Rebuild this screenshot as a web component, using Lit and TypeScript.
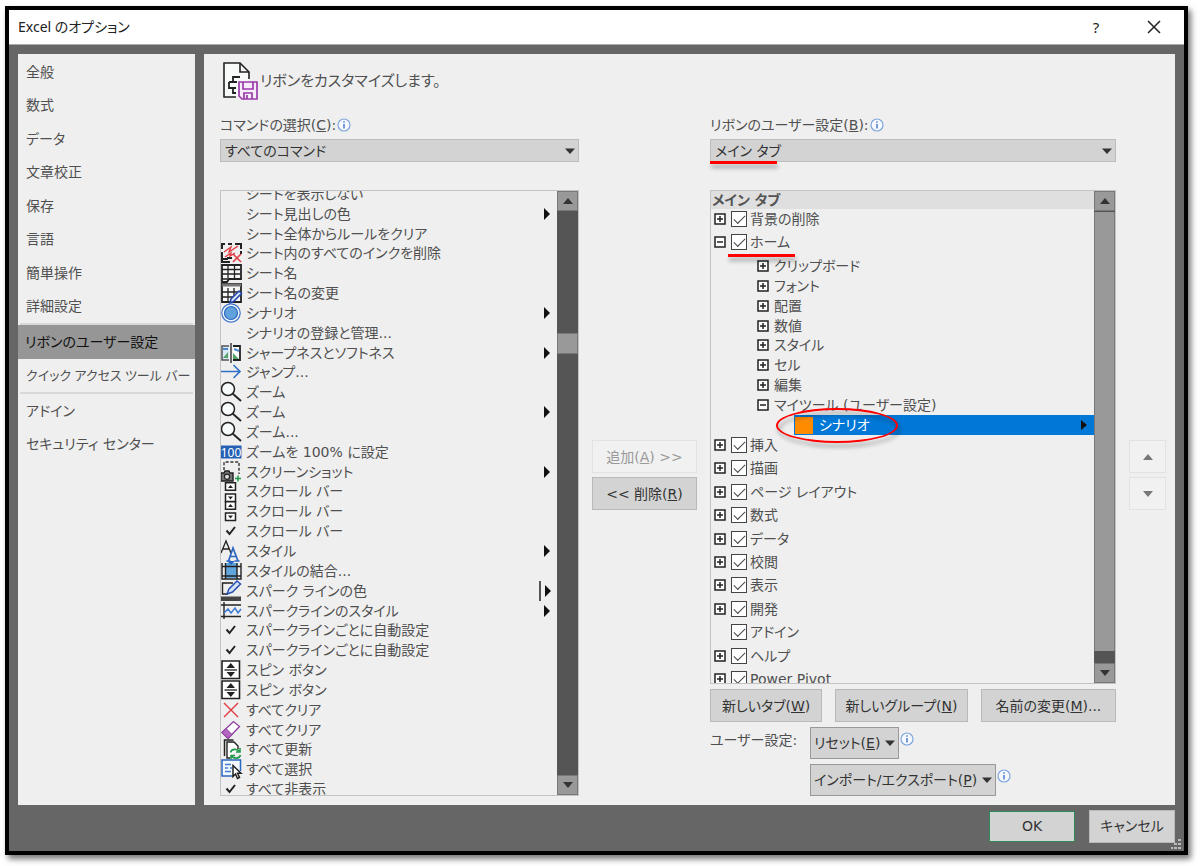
import { LitElement, html, svg, css, nothing, type TemplateResult } from "lit";
import { customElement, property } from "lit/decorators.js";
import { classMap } from "lit/directives/class-map.js";

type Flyout = "menu" | "split" | "";
interface Command { icon: string; label: string; flyout?: Flyout }
interface Tab { label: string; leaf?: boolean }

const INK = "#222";
const BLUE = "#2b66c0";

const icons: Record<string, TemplateResult> = {
  inkDelete: svg`
    <path d="M4 1H1v5M1 9v10h8M7 1h4M14 1h6v5M20 8v3M1 16h6M7 16v-1h4" fill="none" stroke="${INK}" stroke-width="2"/>
    <path d="M3 9l7-5-2 5 9-6M4 14l6-4-1 3 5-3" fill="none" stroke="#e0393e" stroke-width="1.3"/>
    <path d="M12 11l8 8M20 11l-8 8" stroke="#e0393e" stroke-width="1.5"/>`,
  sheet: svg`
    <path d="M1 2h19v14H8l-2 3H1z" fill="#f7f7f7" stroke="${INK}" stroke-width="1.8"/>
    <path d="M1 6.500h18M1 11h18M7 2v13M13.500 2v13M1 16h8" fill="none" stroke="${INK}" stroke-width="1.3"/>`,
  sheetEdit: svg`
    <path d="M1 1h19v18H1z" fill="#f7f7f7" stroke="${INK}" stroke-width="1.8"/>
    <path d="M1 2h19" stroke="#777" stroke-width="3"/>
    <path d="M1 9h18M1 14h14M7 5v14M13 5v10" fill="none" stroke="${INK}" stroke-width="1.3"/>
    <path d="M9 20l1-4 8-8 2.500 2.500-8 8z" fill="#d7e4f7" stroke="#2346a8" stroke-width="1.5"/>`,
  scenario: svg`
    <circle cx="10" cy="10" r="9.200" fill="#f4f8fd" stroke="#3f74c9" stroke-width="1.2"/>
    <circle cx="10" cy="10" r="6.500" fill="#60a3dc" stroke="#2b66c0" stroke-width="1.2"/>`,
  sharp: svg`
    <path d="M8 3H1v14h7" fill="#dbeafa" stroke="#555" stroke-width="1.5"/>
    <path d="M12 3h7v14h-7" fill="#fff" stroke="${INK}" stroke-width="1.8"/>
    <path d="M2 15l5-6v6zM12 10l6 6h-6z" fill="#56a465"/>
    <path d="M13 6l5 2M2 6h5" stroke="#4f8ad0" stroke-width="2"/>
    <path d="M10 0v20" stroke="${INK}" stroke-width="1.3"/>`,
  jump: svg`<path d="M0 9.500h18.500M12.500 3L19 9.500 12.500 16" fill="none" stroke="#2f6fc8" stroke-width="1.6"/>`,
  zoom: svg`
    <circle cx="7" cy="7" r="6.500" fill="#f8fbfc" stroke="${INK}" stroke-width="1.5"/>
    <path d="M11.800 11.800L20 19" stroke="${INK}" stroke-width="1.8"/>`,
  zoom100: svg`
    <path d="M0 3.500h20.500v13H0z" fill="#2560b5"/>
    <text x="10" y="14.500" text-anchor="middle" class="hundred">100</text>`,
  screenshot: svg`
    <path d="M3 8V0h15v12" fill="none" stroke="#333" stroke-width="1.4" stroke-dasharray="3 1.8"/>
    <path d="M0 11h3l1-2h4l1 2h3v8H0z" fill="#777" stroke="${INK}" stroke-width="1.4"/>
    <circle cx="6" cy="14.800" r="2.600" fill="#ddd" stroke="${INK}" stroke-width="1.2"/>
    <path d="M14 16.500h6M17 13.500v6" stroke="#1f9c4b" stroke-width="1.5"/>`,
  scroll: svg`
    <path d="M4.500 .7h10v7.500h-10zM4.500 12h10v7.500h-10z" fill="#fff" stroke="${INK}" stroke-width="1.5"/>
    <path d="M7 6l2.500-3L12 6zM7 14.500l2.500 3 2.500-3z" fill="${INK}"/>`,
  check: svg`<path d="M5.500 9.500l3 3.500L14 6" fill="none" stroke="#222" stroke-width="2"/>`,
  style: svg`
    <path d="M0 12L5 0l5 12M1.800 8h6.500" fill="none" stroke="${INK}" stroke-width="1.3"/>
    <path d="M5.500 20h4M13.500 20h5M7.500 20L12 7l5 13M9 15.500h6" fill="none" stroke="${BLUE}" stroke-width="1.7"/>`,
  mergeStyle: svg`
    <path d="M4 2h12v15H4z" fill="#5ea6dc"/>
    <path d="M1 2v16h19V2M4.500 2v16M16 2v16M1 5.500h19M1 15h19" fill="none" stroke="${INK}" stroke-width="1.4"/>
    <path d="M6 0h8l-4 4z" fill="${BLUE}"/>`,
  sparkColor: svg`
    <path d="M12 2H1.500v11H7" fill="none" stroke="${INK}" stroke-width="1.4"/>
    <path d="M6 13l2-5 8-8 3.500 3-8 8z" fill="#d7e4f7" stroke="#2a50b0" stroke-width="1.5"/>
    <path d="M0 15.500h20v4.500H0z" fill="#444"/>`,
  sparkStyle: svg`
    <path d="M0 4h20M0 15.500h20M3 1v17" fill="none" stroke="${INK}" stroke-width="1.4"/>
    <path d="M3 12l4-4 3 4 4-5 3 5 3-4" fill="none" stroke="#3c7bd6" stroke-width="1.5"/>`,
  spin: svg`
    <path d="M1 1h17.500v17.500H1z" fill="#fff" stroke="${INK}" stroke-width="1.6"/>
    <path d="M5.500 8l4.300-5L14 8zM5.500 12l4.300 5 4.200-5z" fill="${INK}"/>
    <path d="M3.500 10h12.500" stroke="${INK}" stroke-width="1.3"/>`,
  cross: svg`<path d="M3 3l14 14M17 3L3 17" stroke="#e0393e" stroke-width="1.4"/>`,
  eraser: svg`
    <path d="M1 12.500L12.500 1.500l6 5L7 18.500z" fill="#fff" stroke="#8c3c9e" stroke-width="1.3"/>
    <path d="M1 12.500l4-4 6 6-4 4z" fill="#b466c2" stroke="#8c3c9e" stroke-width="1"/>`,
  refresh: svg`
    <path d="M3.500 17V1h9" fill="none" stroke="${INK}" stroke-width="1.5"/>
    <path d="M9 19H6V3h7l4 4v3" fill="#fff" stroke="${INK}" stroke-width="1.4"/>
    <path d="M9.500 13.500c1-4 7-4 9-1M19 9v4h-4M19.500 16c-1 4-7 4-9 1M10 20.500v-4h4" fill="none" stroke="#219a49" stroke-width="1.6"/>`,
  select: svg`
    <path d="M19.500 12V1H1v16h11" fill="#f4f9ff" stroke="${BLUE}" stroke-width="1.5"/>
    <path d="M4 5.500h6M4 9h3M9 9h2M4 12.500h6" stroke="#3c7bd6" stroke-width="1.5"/>
    <path d="M12 6.500v11l2.500-2.500 2 4.500 2-1-2-4.200H20z" fill="#fff" stroke="${INK}" stroke-width="1.5"/>`,
};

const commands: Command[] = [
  { icon: "", label: "シートを表示しない" },
  { icon: "", label: "シート見出しの色", flyout: "menu" },
  { icon: "", label: "シート全体からルールをクリア" },
  { icon: "inkDelete", label: "シート内のすべてのインクを削除" },
  { icon: "sheet", label: "シート名" },
  { icon: "sheetEdit", label: "シート名の変更" },
  { icon: "scenario", label: "シナリオ", flyout: "menu" },
  { icon: "", label: "シナリオの登録と管理..." },
  { icon: "sharp", label: "シャープネスとソフトネス", flyout: "menu" },
  { icon: "jump", label: "ジャンプ..." },
  { icon: "zoom", label: "ズーム" },
  { icon: "zoom", label: "ズーム", flyout: "menu" },
  { icon: "zoom", label: "ズーム..." },
  { icon: "zoom100", label: "ズームを 100% に設定" },
  { icon: "screenshot", label: "スクリーンショット", flyout: "menu" },
  { icon: "scroll", label: "スクロール バー" },
  { icon: "scroll", label: "スクロール バー" },
  { icon: "check", label: "スクロール バー" },
  { icon: "style", label: "スタイル", flyout: "menu" },
  { icon: "mergeStyle", label: "スタイルの結合..." },
  { icon: "sparkColor", label: "スパーク ラインの色", flyout: "split" },
  { icon: "sparkStyle", label: "スパークラインのスタイル", flyout: "menu" },
  { icon: "check", label: "スパークラインごとに自動設定" },
  { icon: "check", label: "スパークラインごとに自動設定" },
  { icon: "spin", label: "スピン ボタン" },
  { icon: "spin", label: "スピン ボタン" },
  { icon: "cross", label: "すべてクリア" },
  { icon: "eraser", label: "すべてクリア" },
  { icon: "refresh", label: "すべて更新" },
  { icon: "select", label: "すべて選択" },
  { icon: "check", label: "すべて非表示" },
];

const topTabs: Tab[] = [{ label: "背景の削除" }, { label: "ホーム" }];
const homeGroups = ["クリップボード", "フォント", "配置", "数値", "スタイル", "セル", "編集", "マイツール (ユーザー設定)"];
const otherTabs: Tab[] = [
  { label: "挿入" }, { label: "描画" }, { label: "ページ レイアウト" }, { label: "数式" },
  { label: "データ" }, { label: "校閲" }, { label: "表示" }, { label: "開発" },
  { label: "アドイン", leaf: true }, { label: "ヘルプ" }, { label: "Power Pivot" },
];

const base = css`
  * { box-sizing: border-box; }
  button, select, input { font: inherit; font-feature-settings: inherit; color: inherit; margin: 0; }
  ul { list-style: none; margin: 0; padding: 0; }
  svg { display: block; flex: none; }
`;

const infoIcon = html`<svg width="14" height="14" viewBox="0 0 14 14" role="img" aria-label="情報">
  <circle cx="7" cy="7" r="6" fill="#f6faff" stroke="#7fa6dc" stroke-width="1.2"/>
  <path d="M7 6v4.500M7 3.200v1.600" stroke="#3f74c9" stroke-width="1.4"/></svg>`;
const caret = html`<svg width="10" height="6" viewBox="0 0 10 6" aria-hidden="true"><path d="M0 .5h10L5 6z" fill="#333"/></svg>`;

@customElement("scroll-rail")
export class ScrollRail extends LitElement {
  @property() thumb: "short" | "long" = "short";
  static styles = [base, css`
    :host { display: flex; width: 21px; flex: none; background: #555; }
    .wrap { display: flex; flex-direction: column; flex: 1; }
    .end, .thumb { background: #999; border: 1px solid #777; }
    .end { height: 20px; padding: 0; display: grid; place-items: center; }
    .before { flex: 122 1 0; }
    .thumb { flex: 0 0 21px; }
    .after { flex: 421 1 0; }
    .long .before { flex: 0 0 1px; }
    .long .thumb { flex: 439 1 0; border-width: 0 1px; }
    .long .after { flex: 0 0 12px; }
  `];
  render() {
    return html`<div class=${classMap({ wrap: true, long: this.thumb === "long" })}>
      <button class="end" aria-label="上へスクロール"><svg width="10" height="6" viewBox="0 0 10 6"><path d="M0 6h10L5 0z" fill="#333"/></svg></button>
      <div class="before"></div><div class="thumb"></div><div class="after"></div>
      <button class="end" aria-label="下へスクロール"><svg width="10" height="6" viewBox="0 0 10 6"><path d="M0 0h10L5 6z" fill="#333"/></svg></button>
    </div>`;
  }
}

@customElement("command-list")
export class CommandList extends LitElement {
  static styles = [base, css`
    :host { display: flex; height: 606px; overflow: hidden; border: 1px solid #c3c3c3; }
    ul { flex: 1; height: 615px; margin-top: -7px; display: grid; grid-auto-rows: 1fr; }
    li { display: flex; align-items: center; min-height: 0; line-height: 18px; white-space: nowrap; }
    .icon { width: 20px; height: 20px; margin-right: 5px; flex: none; }
    .label { flex: 1; }
    .arrow { margin-right: 7px; }
    .split { border-left: 2px solid #555; padding-left: 4px; height: 20px; display: flex; align-items: center; }
    .split .arrow { margin-right: 6px; }
    .hundred { font: 12px "Noto Sans", sans-serif; fill: #fff; }
  `];
  render() {
    const arrow = html`<svg class="arrow" width="6" height="12" viewBox="0 0 6 12"><path d="M0 0l6 6-6 6z" fill="#111"/></svg>`;
    return html`<ul>${commands.map((c) => html`<li>
      <svg class="icon" viewBox="0 0 20 20" overflow="visible" aria-hidden="true">${c.icon ? icons[c.icon] : nothing}</svg>
      <span class="label">${c.label}</span>
      ${c.flyout === "split" ? html`<span class="split">${arrow}</span>` : c.flyout ? arrow : nothing}
    </li>`)}</ul><scroll-rail></scroll-rail>`;
  }
}

@customElement("ribbon-tree")
export class RibbonTree extends LitElement {
  static styles = [base, css`
    :host { display: flex; height: 494px; overflow: hidden; border: 1px solid #c3c3c3; }
    .body { flex: 1; min-width: 0; }
    .heading { height: 18px; line-height: 18px; padding-left: 1px; background: #dfdfdf; font-weight: 700; color: #555; }
    ul { display: grid; grid-auto-rows: 1fr; }
    .top { height: 47px; margin-top: -2px; }
    .groups { height: 179px; margin-top: 2px; }
    .rest { height: 258px; margin-top: -2px; }
    li { position: relative; display: flex; align-items: center; min-height: 0; padding-left: 3px; line-height: 18px; white-space: nowrap; }
    .groups li { padding-left: 46px; gap: 5px; }
    .toggle { width: 12px; height: 12px; padding: 0; border: 0; background: none; margin-right: 5px; flex: none; }
    .groups .toggle { margin-right: 0; }
    .leaf { padding-left: 20px; }
    label { display: flex; align-items: center; gap: 3px; }
    input { appearance: none; width: 16px; height: 16px; border: 1px solid #444; background: #fff; display: grid; place-items: center; }
    input:checked::before { content: ""; width: 10px; height: 5px; border: solid #444; border-width: 0 0 1px 1px; rotate: -45deg; translate: 0 -1px; }
    .groups .selected { margin-left: 83px; padding: 0 7px 0 1px; gap: 6px; background: #0078d7; color: #fff; }
    .swatch { width: 18px; height: 17px; background: #ff8c00; }
    .name { flex: 1; }
    .underline { position: absolute; left: 17px; bottom: -3px; width: 67px; height: 3px; background: #f00; box-shadow: 1px 4px 4px #0005; z-index: 1; }
    .ring { position: absolute; left: -18px; top: -7px; width: 122px; height: 35px; border: 2px solid #f00; border-radius: 50%; filter: drop-shadow(2px 4px 2px #0006); z-index: 1; }
  `];
  private toggle(open: boolean, label: string) {
    return html`<button class="toggle" aria-label=${label} aria-expanded=${open}><svg width="12" height="12" viewBox="0 0 12 12">
      <path d="M1 1h10v10H1z" fill="#fff" stroke="#222" stroke-width="1.5"/>
      <path d=${open ? "M3 6h6" : "M3 6h6M6 3v6"} stroke="#222" stroke-width="1.5"/></svg></button>`;
  }
  private tab(t: Tab) {
    const home = t.label === "ホーム";
    return html`<li class=${t.leaf ? "leaf" : ""}>${t.leaf ? nothing : this.toggle(home, t.label)}
      <label><input type="checkbox" checked>${t.label}</label>${home ? html`<span class="underline"></span>` : nothing}</li>`;
  }
  render() {
    return html`<div class="body">
      <div class="heading">メイン タブ</div>
      <ul class="top">${topTabs.map((t) => this.tab(t))}</ul>
      <ul class="groups">
        ${homeGroups.map((g, i) => html`<li>${this.toggle(i === homeGroups.length - 1, g)}<span>${g}</span></li>`)}
        <li class="selected"><span class="swatch"></span><span class="name">シナリオ</span>
          <svg width="6" height="10" viewBox="0 0 6 10"><path d="M0 0l6 5-6 5z" fill="#111"/></svg><span class="ring"></span></li>
      </ul>
      <ul class="rest">${otherTabs.map((t) => this.tab(t))}</ul>
    </div><scroll-rail thumb="long"></scroll-rail>`;
  }
}

@customElement("app-root")
export class AppRoot extends LitElement {
  static styles = [base, css`
    :host {
      display: flex; min-height: 100vh; box-sizing: border-box; padding: 6px 12px 12px 5px; background: #fff;
      font: 14px/20px "DejaVu Sans", "Noto Sans CJK JP", sans-serif; font-feature-settings: "palt"; color: #505050;
    }
    .window { flex: 1; display: flex; flex-direction: column; border: 4px solid #000; background: #666; box-shadow: 3px 4px 6px #0008; min-width: 0; }
    .title { display: flex; align-items: center; height: 35px; padding: 0 22px 0 9px; background: #fff; border-bottom: 1px solid #aaa; color: #222; font-family: "Noto Sans", "Noto Sans CJK JP", sans-serif; }
    .title h1 { flex: 1; margin: 0; font-size: 14px; font-weight: 400; }
    .title button { border: 0; background: none; padding: 0; width: 16px; height: 24px; display: grid; place-items: center; }
    .title .help { font-size: 15px; }
    .title .close { margin-left: 42px; }
    .content { flex: 1; display: flex; gap: 9px; padding: 9px 9px 0; }
    nav, main { background: #efefef; }
    nav { flex: none; width: 177px; padding-top: 1px; }
    nav ul { display: grid; grid-template-columns: minmax(0, 1fr); grid-auto-rows: 1fr; }
    .general { height: 268px; }
    .custom, .extra { height: 67px; }
    nav a { display: flex; align-items: center; height: 100%; padding-left: 8px; color: inherit; text-decoration: none; white-space: nowrap; }
    nav .current { background: #969696; color: #111; padding-left: 7px; }
    nav .long { font-size: 13px; font-family: "Noto Sans", "Noto Sans CJK JP", sans-serif; }
    nav hr { height: 2px; border: 0; background: #d8d8d8; margin: 0 2px; }
    main { flex: 1; min-width: 0; padding: 8px 9px 9px 16px; }
    header { display: flex; align-items: center; gap: 2px; height: 38px; margin-bottom: 15px; }
    header h2 { margin: 0; font-size: 15px; font-weight: 400; }
    .grid { display: grid; grid-template-columns: minmax(0, 359fr) 105px minmax(0, 406fr) 37px; gap: 13px; align-items: start; }
    .caption { display: flex; align-items: center; gap: 1px; height: 20px; margin-bottom: 4px; }
    .drop { position: relative; margin-bottom: 28px; }
    .drop select { display: block; appearance: none; width: 100%; height: 23px; padding: 0 24px 0 4px; border: 1px solid #bdbdbd; border-radius: 0; background: #d3d3d3; color: #333; }
    .drop svg { position: absolute; right: 4px; top: 9px; }
    .mark { position: absolute; left: 0; bottom: -2px; width: 67px; height: 3px; background: #f00; box-shadow: 1px 4px 4px #0005; }
    .push { display: inline-flex; align-items: center; justify-content: center; height: 33px; padding: 0 4px; border: 1px solid #b9b9b9; background: #d3d3d3; color: #333; white-space: nowrap; }
    .push:disabled, .order button { background: #f1f1f1; border-color: #e2e2e2; color: #999; }
    .side { display: grid; gap: 4px; padding-top: 325px; }
    .edit { display: flex; gap: 13px; margin: 5px 0; }
    .edit .w { flex: 111 1 0; }
    .edit .n { flex: 133 1 0; }
    .edit .m { flex: 136 1 0; }
    .reset { display: grid; grid-template-columns: 100px 1fr; row-gap: 5px; }
    .reset div { display: flex; gap: 1px; grid-column: 2; }
    .reset span { line-height: 26px; }
    .reset .push { gap: 5px; padding: 0 3px; border: 1px solid #999; height: 32px; }
    .reset div > svg { margin-top: 5px; }
    footer { position: relative; display: flex; justify-content: flex-end; align-items: center; gap: 14px; height: 46px; padding: 0 9px 4px; }
    footer .push { width: 86px; }
    footer .ok { border: 1px solid #2e8b57; height: 31px; }
    .grip { position: absolute; right: 3px; bottom: 2px; }
  `];
  private nav(items: string[], cls: string) {
    return html`<ul class=${cls}>${items.map((t) => html`<li><a href="#" class=${classMap({
      current: t === "リボンのユーザー設定", long: t.length > 14,
    })}>${t}</a></li>`)}</ul>`;
  }
  render() {
    return html`<div class="window">
      <div class="title"><h1>Excel のオプション</h1>
        <button class="help" aria-label="ヘルプ">?</button>
        <button class="close" aria-label="閉じる"><svg width="14" height="14" viewBox="0 0 14 14"><path d="M1 1l12 12M13 1L1 13" stroke="#222" stroke-width="1.5"/></svg></button>
      </div>
      <div class="content">
        <nav>
          ${this.nav(["全般", "数式", "データ", "文章校正", "保存", "言語", "簡単操作", "詳細設定"], "general")}
          <hr>${this.nav(["リボンのユーザー設定", "クイック アクセス ツール バー"], "custom")}
          <hr>${this.nav(["アドイン", "セキュリティ センター"], "extra")}
        </nav>
        <main>
          <header>
            <svg width="38" height="38" viewBox="0 0 38 38" aria-hidden="true">
              <path d="M16 35H4V1h16l9 9v7" fill="#f8fafa" stroke="#222" stroke-width="1.6"/>
              <path d="M20 1v9h9" fill="none" stroke="#222" stroke-width="1.6"/>
              <path d="M20 15h-7v5M9 20h8M9 20v6h4v5h3M13 26h3" fill="none" stroke="#222" stroke-width="1.8"/>
              <path d="M19 20h18v17H22l-3-3z" fill="#f7ecf9" stroke="#9b3bab" stroke-width="1.7"/>
              <path d="M23 20v7h10v-7M24 37v-6h8v6M27 33v4" fill="none" stroke="#9b3bab" stroke-width="1.7"/>
            </svg>
            <h2>リボンをカスタマイズします。</h2>
          </header>
          <div class="grid">
            <section>
              <div class="caption"><label for="source">コマンドの選択(<u>C</u>):</label>${infoIcon}</div>
              <div class="drop"><select id="source"><option>すべてのコマンド</option></select>${caret}</div>
              <command-list></command-list>
            </section>
            <div class="side">
              <button class="push" disabled><span>追加(<u>A</u>) &gt;&gt;</span></button>
              <button class="push"><span>&lt;&lt; 削除(<u>R</u>)</span></button>
            </div>
            <section>
              <div class="caption"><label for="target">リボンのユーザー設定(<u>B</u>):</label>${infoIcon}</div>
              <div class="drop"><select id="target"><option>メイン タブ</option></select>${caret}<span class="mark"></span></div>
              <ribbon-tree></ribbon-tree>
              <div class="edit">
                <button class="push w"><span>新しいタブ(<u>W</u>)</span></button>
                <button class="push n"><span>新しいグループ(<u>N</u>)</span></button>
                <button class="push m"><span>名前の変更(<u>M</u>)...</span></button>
              </div>
              <div class="reset">
                <span>ユーザー設定:</span>
                <div><button class="push"><span>リセット(<u>E</u>)</span>${caret}</button>${infoIcon}</div>
                <div><button class="push"><span>インポート/エクスポート(<u>P</u>)</span>${caret}</button>${infoIcon}</div>
              </div>
            </section>
            <div class="side order">
              <button class="push" aria-label="上へ"><svg width="10" height="6" viewBox="0 0 10 6"><path d="M0 6h10L5 0z" fill="#777"/></svg></button>
              <button class="push" aria-label="下へ"><svg width="10" height="6" viewBox="0 0 10 6"><path d="M0 0h10L5 6z" fill="#777"/></svg></button>
            </div>
          </div>
        </main>
      </div>
      <footer>
        <button class="push ok">OK</button><button class="push">キャンセル</button>
        <svg class="grip" width="10" height="10" viewBox="0 0 10 10" aria-hidden="true"><path d="M7 0h3v2H7zM7 4h3v2H7zM3 4h3v2H3zM7 8h3v2H7zM3 8h3v2H3zM0 8h2v2H0z" fill="#bbb"/></svg>
      </footer>
    </div>`;
  }
}
